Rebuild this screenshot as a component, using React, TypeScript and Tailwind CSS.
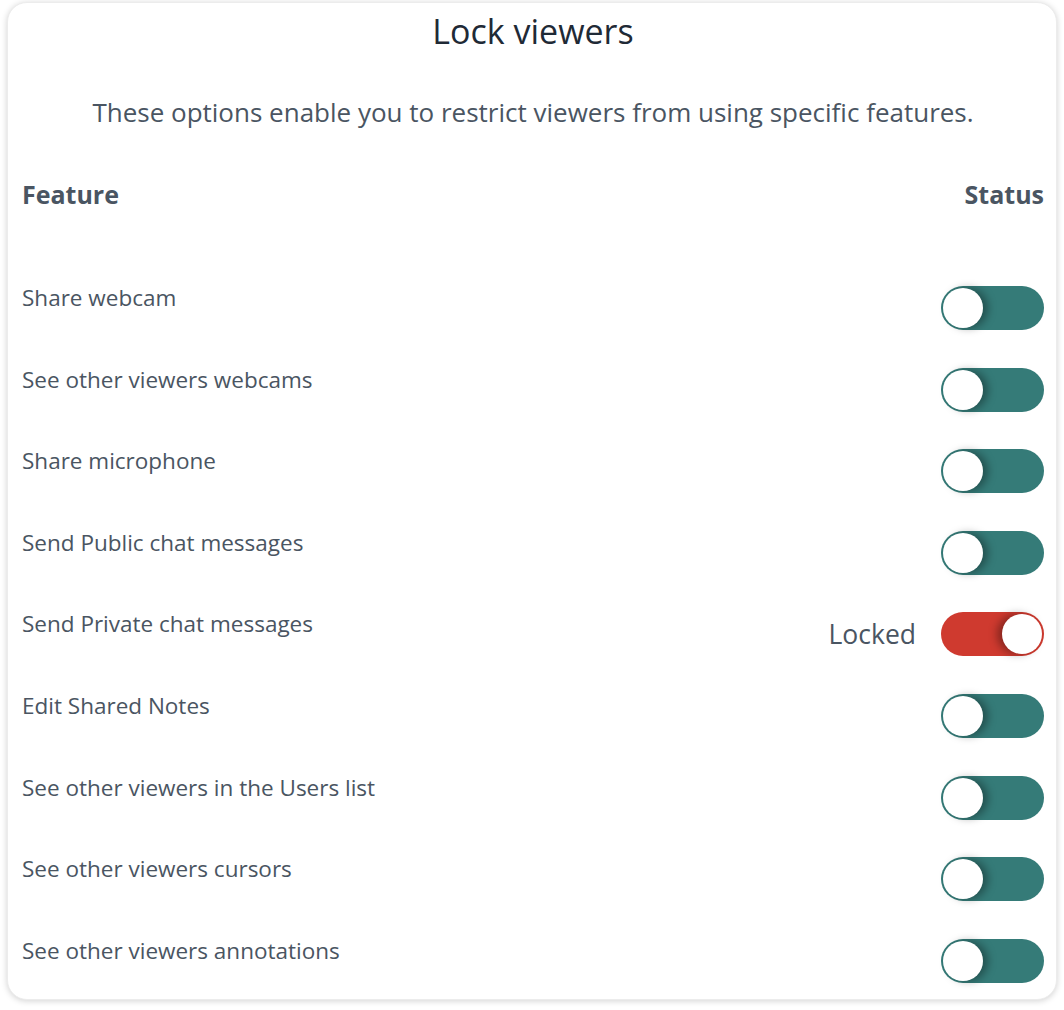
import React from "react";

const rows: { label: string; locked?: boolean }[] = [
  { label: "Share webcam" },
  { label: "See other viewers webcams" },
  { label: "Share microphone" },
  { label: "Send Public chat messages" },
  { label: "Send Private chat messages", locked: true },
  { label: "Edit Shared Notes" },
  { label: "See other viewers in the Users list" },
  { label: "See other viewers cursors" },
  { label: "See other viewers annotations" },
];

function Toggle({ on }: { on?: boolean }) {
  if (on) {
    return (
      <div className="relative w-[103px] h-[44px] rounded-full bg-[#cf3a2f] shrink-0">
        <div className="absolute right-[2px] top-[2px] w-[40px] h-[40px] rounded-full bg-white shadow-[-5px_0_8px_rgba(0,0,0,0.35)]" />
      </div>
    );
  }
  return (
    <div className="relative w-[103px] h-[44px] rounded-full bg-[#357b78] shrink-0">
      <div className="absolute left-[2px] top-[2px] w-[40px] h-[40px] rounded-full bg-white shadow-[5px_0_8px_rgba(0,0,0,0.35)]" />
    </div>
  );
}

export default function App() {
  return (
    <div className="w-[1064px] h-[1010px] bg-white" style={{ fontFamily: "'Open Sans', Lato, sans-serif" }}>
      <div className="ml-[7px] pt-[2px]">
        <div className="w-[1050px] h-[998px] rounded-[20px] bg-white shadow-[0_1px_6px_rgba(0,0,0,0.18)] border border-[#ececec] pl-[14px] pr-[12px]">
          <h1 className="text-center text-[34px] leading-[40px] text-[#1f2a36] pt-[8px]">Lock viewers</h1>
          <p className="text-center text-[26px] leading-[32px] text-[#4a5562] mt-[45px] whitespace-nowrap">
            These options enable you to restrict viewers from using specific features.
          </p>
          <div className="flex justify-between mt-[52px] text-[25px] leading-[28px] font-bold text-[#4a5562]">
            <span>Feature</span>
            <span>Status</span>
          </div>
          <div className="mt-[78px] flex flex-col">
            {rows.map((r) => (
              <div key={r.label} className="flex justify-between items-start h-[81.6px]">
                <span className="text-[22.5px] leading-[24px] text-[#4a5562]">{r.label}</span>
                <div className="flex items-center gap-[25px]">
                  {r.locked && <span className="text-[26.5px] leading-[32px] text-[#4a5562]">Locked</span>}
                  <Toggle on={r.locked} />
                </div>
              </div>
            ))}
          </div>
        </div>
      </div>
    </div>
  );
}
